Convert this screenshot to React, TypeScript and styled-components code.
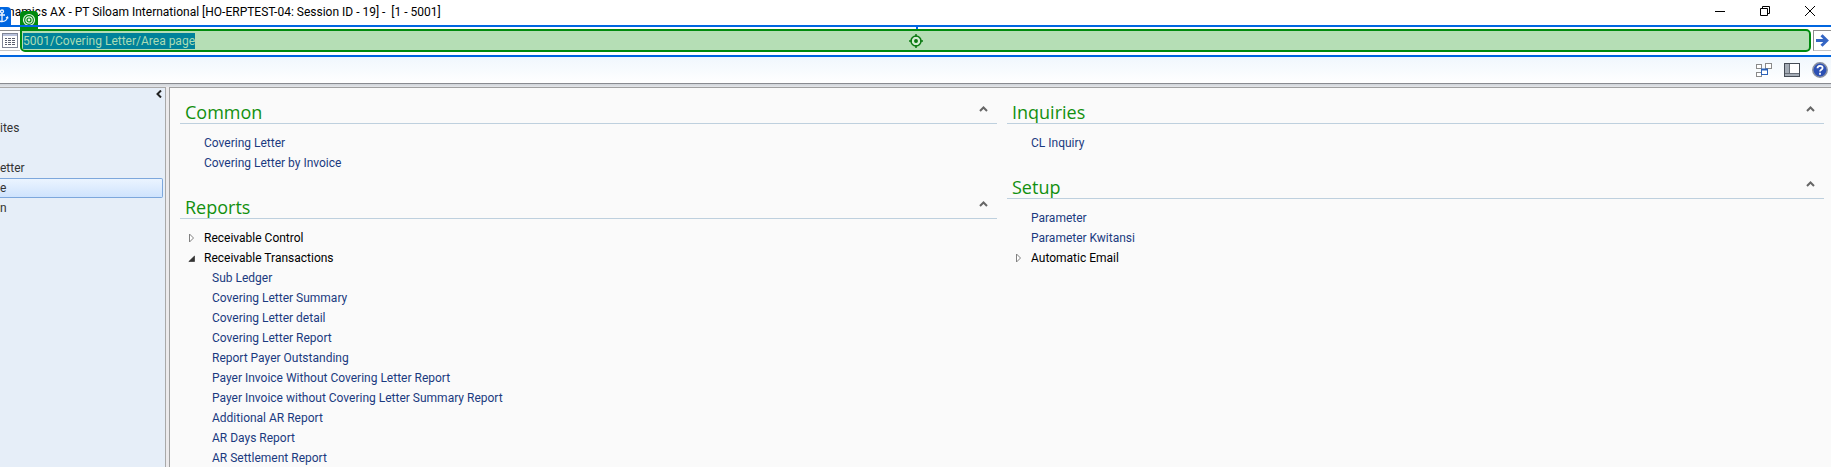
import React, { useEffect, useRef } from "react";
import styled, { createGlobalStyle } from "styled-components";

const blue = "#0066e0";
const green = "#008a0e";

const GlobalStyle = createGlobalStyle`
  *, *::before, *::after { box-sizing: border-box; }
  body {
    margin: 0;
    background: #fafafa;
    font-family: Roboto, "Open Sans", sans-serif;
    font-size: 12px;
    line-height: 20px;
    color: #000;
  }
  ul { list-style: none; margin: 0; padding: 0; }
  button { font: inherit; color: inherit; background: none; border: 0; padding: 0; }
`;

const Window = styled.div`
  display: flex;
  flex-direction: column;
  height: 100vh;
  overflow: hidden;
`;

const TitleBar = styled.header`
  display: flex;
  align-items: center;
  justify-content: space-between;
  height: 25px;
  padding: 0 13px 4px 8px;
  background: #fff;
`;

const Title = styled.h1`
  margin: 0;
  padding-top: 2px;
  font-size: 12px;
  font-weight: 400;
  white-space: pre;
`;

const WindowButtons = styled.div`
  display: flex;
  gap: 29px;
`;

const IconButton = styled.button`
  display: flex;
  align-items: center;
  justify-content: center;
  min-width: 16px;
  height: 16px;
`;

const AddressBar = styled.div`
  position: relative;
  display: flex;
  align-items: stretch;
  height: 32px;
  padding: 2px 0 3px;
  border-top: 2px solid ${blue};
  border-bottom: 2px solid ${blue};
  background: #fff;
`;

const AddressEnd = styled.div<{ $width: number; $divided?: boolean }>`
  display: flex;
  align-items: center;
  justify-content: center;
  flex: none;
  width: ${(p) => p.$width}px;
  margin: 1px 0;
  border-top: 1px solid #8d8d8d;
  border-bottom: 1px solid #c4c4c4;
  border-left: ${(p) => (p.$divided ? "1px solid #8d8d8d" : "0")};
`;

const AddressField = styled.label`
  position: relative;
  display: flex;
  align-items: center;
  flex: 1;
  margin-right: 2px;
  border: 2px solid ${green};
  border-radius: 0 5px 5px 5px;
  background: #b5deb5;
`;

const AddressInput = styled.input`
  flex: 1;
  height: 16px;
  padding: 0 1px;
  border: 0;
  outline: 0;
  background: transparent;
  font: inherit;
  line-height: 16px;
  color: #a9dcb4;
  &::selection { background: #00829a; color: #a9dcb4; }
`;

const Badge = styled.span<{ $color: string; $left: number; $top: number; $crossed?: boolean }>`
  position: absolute;
  left: ${(p) => p.$left}px;
  top: ${(p) => p.$top}px;
  display: flex;
  align-items: center;
  justify-content: center;
  width: 18px;
  height: 18px;
  border-radius: 4px 4px 0 0;
  background: ${(p) => p.$color};

  &::after {
    content: "";
    display: ${(p) => (p.$crossed ? "block" : "none")};
    position: absolute;
    left: 0;
    right: 0;
    bottom: 2px;
    height: 2px;
    background: ${blue};
  }
`;

const Crosshair = styled.svg`
  position: absolute;
  left: 50%;
  top: 50%;
  transform: translate(-50%, -50%);
`;

const Tick = styled.span`
  position: absolute;
  left: 50%;
  top: 0;
  width: 2px;
  height: 2px;
  background: ${blue};
`;

const Toolbar = styled.div`
  display: flex;
  align-items: center;
  justify-content: flex-end;
  gap: 12px;
  height: 27px;
  padding: 0 3px 0 0;
  border-bottom: 1px solid #898b90;
  background: linear-gradient(#f0f7fd, #fff);
`;

const Body = styled.div`
  display: flex;
  flex: 1;
  gap: 3px;
  min-height: 0;
  padding-top: 3px;
  background: linear-gradient(#cfd3d8, #e4e6e9 3px, #eceaec 3px);
`;

const Sidebar = styled.nav`
  flex: none;
  width: 166px;
  border-top: 1px solid #a9a9a9;
  border-right: 1px solid #a9a9a9;
  background: #e6eef8;
`;

const SidebarTop = styled.div`
  display: flex;
  justify-content: flex-end;
  height: 30px;
  padding: 2px 3px 0 0;
`;

const CollapseButton = styled.button`
  display: flex;
  align-items: center;
  height: 8px;
`;

const SideItem = styled.li<{ $selected?: boolean; $spaced?: boolean }>`
  height: 20px;
  margin: 0 2px ${(p) => (p.$spaced ? 20 : 0)}px 0;
  line-height: 18px;
  color: #333;
  border: 1px solid ${(p) => (p.$selected ? "#7da7dc" : "transparent")};
  border-left: 0;
  border-radius: 0 2px 2px 0;
  background: ${(p) => (p.$selected ? "linear-gradient(#ebf4ff, #cfe3fd)" : "none")};
  a { color: inherit; text-decoration: none; }
`;

const Main = styled.main`
  display: flex;
  flex: 1;
  gap: 10px;
  min-width: 0;
  overflow: hidden;
  padding: 5px 7px 0 10px;
  border-top: 1px solid #a0a0a0;
  border-left: 1px solid #a0a0a0;
  background: #fafafa;
`;

const Column = styled.div`
  flex: 1;
`;

const Section = styled.section`
  padding-bottom: 15px;
`;

const SectionHead = styled.div`
  display: flex;
  align-items: center;
  justify-content: space-between;
  height: 31px;
  margin-bottom: 9px;
  padding: 2px 6px 0 5px;
  border-bottom: 1px solid #bed0de;
`;

const SectionTitle = styled.h2`
  margin: 0;
  padding-top: 6px;
  font-family: "Open Sans", sans-serif;
  font-size: 18px;
  line-height: 30px;
  font-weight: 400;
  color: #12900f;
`;

const Row = styled.li<{ $level?: number }>`
  display: flex;
  align-items: center;
  height: 20px;
  padding-left: ${(p) => (p.$level === 2 ? 32 : p.$level === 1 ? 24 : 8)}px;
  white-space: nowrap;
`;

const RowLink = styled.a`
  color: #1b3a80;
  text-decoration: none;
`;

const GroupButton = styled.button`
  display: flex;
  align-items: center;
  gap: 9px;
`;

function Chevron() {
  return (
    <svg width="9" height="6" viewBox="0 0 9 6" fill="none" stroke="#666" strokeWidth="2">
      <path d="M1 5 L4.500 1.500 L8 5" />
    </svg>
  );
}

function Group({ label, open }: { label: string; open?: boolean }) {
  return (
    <Row>
      <GroupButton aria-expanded={!!open}>
        <svg width="7" height="10" viewBox="0 0 7 10">
          {open ? (
            <path d="M6.500 3 V8.500 H0.800 Z" fill="#333" stroke="#222" strokeWidth=".6" />
          ) : (
            <path d="M1.500 1 L5.500 5 L1.500 9 Z" fill="#fff" stroke="#808080" />
          )}
        </svg>
        {label}
      </GroupButton>
    </Row>
  );
}

function Panel({ title, children }: { title: string; children: React.ReactNode }) {
  return (
    <Section>
      <SectionHead>
        <SectionTitle>{title}</SectionTitle>
        <IconButton aria-label={`Collapse ${title}`}>
          <Chevron />
        </IconButton>
      </SectionHead>
      <ul>{children}</ul>
    </Section>
  );
}

function Links({ items, level = 1 }: { items: string[]; level?: number }) {
  return (
    <>
      {items.map((item) => (
        <Row key={item} $level={level}>
          <RowLink href="#">{item}</RowLink>
        </Row>
      ))}
    </>
  );
}

const transactionReports = [
  "Sub Ledger",
  "Covering Letter Summary",
  "Covering Letter detail",
  "Covering Letter Report",
  "Report Payer Outstanding",
  "Payer Invoice Without Covering Letter Report",
  "Payer Invoice without Covering Letter Summary Report",
  "Additional AR Report",
  "AR Days Report",
  "AR Settlement Report",
];

export default function App() {
  const address = useRef<HTMLInputElement>(null);
  useEffect(() => {
    address.current?.focus();
    address.current?.select();
  }, []);

  return (
    <Window>
      <GlobalStyle />
      <TitleBar>
        <Title>{"namics AX - PT Siloam International [HO-ERPTEST-04: Session ID - 19] -  [1 - 5001]"}</Title>
        <WindowButtons>
          <IconButton aria-label="Minimize">
            <svg width="10" height="10" viewBox="0 0 10 10" stroke="#000">
              <path d="M0 5.500 H10" />
            </svg>
          </IconButton>
          <IconButton aria-label="Restore">
            <svg width="10" height="10" viewBox="0 0 10 10" fill="none" stroke="#000">
              <path d="M.5 2.500 H7.500 V9.500 H.5 Z M2.500 2.500 V.5 H9.500 V7.500 H7.500" />
            </svg>
          </IconButton>
          <IconButton aria-label="Close">
            <svg width="10" height="10" viewBox="0 0 10 10" stroke="#000">
              <path d="M0 0 L10 10 M10 0 L0 10" />
            </svg>
          </IconButton>
        </WindowButtons>
      </TitleBar>

      <AddressBar>
        <Tick />
        <AddressEnd $width={20}>
          <svg width="16" height="15" viewBox="0 0 16 15">
            <rect x=".5" y=".5" width="15" height="14" fill="#fff" stroke="#7f8596" />
            <path d="M1 2 H15" stroke="#b9c2dc" strokeWidth="2" />
            <path d="M3 5.500 H5 M3 7.500 H5 M3 9.500 H5 M3 11.500 H5 M6 5.500 H9 M6 7.500 H9 M6 9.500 H9 M6 11.500 H9 M10 5.500 H13 M10 7.500 H13 M10 9.500 H13 M10 11.500 H13" stroke="#5c6070" />
          </svg>
        </AddressEnd>
        <AddressField>
          <AddressInput ref={address} aria-label="Address" defaultValue="5001/Covering Letter/Area page" />
          <Crosshair width="14" height="14" viewBox="0 0 14 14" fill="none" stroke="#0b7a12" strokeWidth="1.500">
            <circle cx="7" cy="7" r="5" fill="#d3ecd3" />
            <circle cx="7" cy="7" r="1.200" fill="#0b7a12" />
            <path d="M7 0 V3 M7 11 V14 M0 7 H3 M11 7 H14" />
          </Crosshair>
          <Badge $color={green} $left={-2} $top={-20} $crossed>
            <svg width="14" height="14" viewBox="0 0 14 14" fill="none" stroke="#e4f5e4" strokeWidth="1.200">
              <circle cx="7" cy="7" r="5.500" />
              <circle cx="7" cy="7" r="3.200" />
              <circle cx="7" cy="7" r=".8" fill="#e4f5e4" />
            </svg>
          </Badge>
        </AddressField>
        <AddressEnd $width={18} $divided>
          <IconButton aria-label="Go">
            <svg width="13" height="13" viewBox="0 0 13 13" fill="none" stroke="#3566c4" strokeWidth="3">
              <path d="M0 6.500 H10 M5.500 1.200 L10.800 6.500 L5.500 11.800" />
            </svg>
          </IconButton>
        </AddressEnd>
        <Badge $color={blue} $left={-7} $top={-20}>
          <svg width="14" height="14" viewBox="0 0 14 14" fill="none" stroke="#eef5ff" strokeWidth="1.300">
            <circle cx="7" cy="2.500" r="1.500" />
            <path d="M7 4 V12.500 M4 6 H10 M1.500 8 C2 11 4 12.500 7 12.500 C10 12.500 12 11 12.500 8 M1 9.500 L1.500 8 L3 9 M13 9.500 L12.500 8 L11 9" />
          </svg>
        </Badge>
      </AddressBar>

      <Toolbar>
        <IconButton aria-label="Windows">
          <svg width="16" height="15" viewBox="0 0 16 15" fill="#fff" stroke="#8a8a8a">
            <rect x=".5" y="1.500" width="5" height="4" />
            <rect x="9.500" y=".5" width="6" height="5" />
            <rect x=".5" y="9.500" width="5" height="4" />
            <rect x="5.500" y="6.500" width="6" height="5" stroke="#2b62b8" />
            <path d="M5 6.500 H12" stroke="#2b62b8" strokeWidth="2" />
          </svg>
        </IconButton>
        <IconButton aria-label="Layout">
          <svg width="16" height="14" viewBox="0 0 16 14">
            <rect x=".5" y=".5" width="15" height="13" fill="#fff" stroke="#444b55" />
            <path d="M1 1 H5 V10 H15 V13 H1 Z" fill="#a3abb5" />
            <path d="M5.500 1 V10 M1 10.500 H15" stroke="#666d77" />
          </svg>
        </IconButton>
        <IconButton aria-label="Help">
          <svg width="16" height="16" viewBox="0 0 16 16" fill="none">
            <circle cx="8" cy="8" r="7.200" fill="#2c50b4" stroke="#8990a0" strokeWidth="1.500" />
            <path d="M5.500 6.300 C5.500 3 10.600 3 10.600 6 C10.600 7.800 8 7.800 8 9.600 M8 10.800 V12.800" stroke="#fff" strokeWidth="1.800" />
          </svg>
        </IconButton>
      </Toolbar>

      <Body>
        <Sidebar>
          <SidebarTop>
            <CollapseButton aria-label="Collapse navigation">
              <svg width="6" height="8" viewBox="0 0 6 8" fill="none" stroke="#222" strokeWidth="2">
                <path d="M5 .5 L1.500 4 L5 7.500" />
              </svg>
            </CollapseButton>
          </SidebarTop>
          <ul>
            <SideItem $spaced><a href="#">ites</a></SideItem>
            <SideItem><a href="#">etter</a></SideItem>
            <SideItem $selected><a href="#">e</a></SideItem>
            <SideItem><a href="#">n</a></SideItem>
          </ul>
        </Sidebar>
        <Main>
          <Column>
            <Panel title="Common">
              <Links items={["Covering Letter", "Covering Letter by Invoice"]} />
            </Panel>
            <Panel title="Reports">
              <Group label="Receivable Control" />
              <Group label="Receivable Transactions" open />
              <Links items={transactionReports} level={2} />
            </Panel>
          </Column>
          <Column>
            <Panel title="Inquiries">
              <Links items={["CL Inquiry"]} />
            </Panel>
            <Panel title="Setup">
              <Links items={["Parameter", "Parameter Kwitansi"]} />
              <Group label="Automatic Email" />
            </Panel>
          </Column>
        </Main>
      </Body>
    </Window>
  );
}
